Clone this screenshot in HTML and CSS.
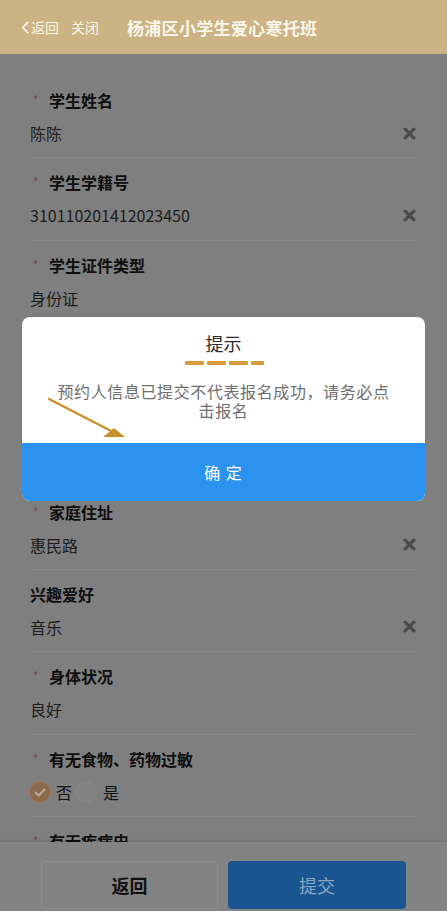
FILE: index.html
```html
<!DOCTYPE html>
<html lang="zh">
<head>
<meta charset="utf-8">
<title>杨浦区小学生爱心寒托班</title>
<link rel="stylesheet" href="styles.css">
</head>
<body>
<header class="nav">
  <span class="nav-back"><svg class="chev" viewBox="0 0 10 16" width="9" height="15"><path d="M8 1.5 L2 8 L8 14.5" fill="none" stroke="#fff" stroke-width="1.6"/></svg>返回</span>
  <span class="nav-close">关闭</span>
  <span class="nav-title">杨浦区小学生爱心寒托班</span>
</header>

<main class="form">
  <div class="field">
    <div class="label"><span class="req">*</span>学生姓名</div>
    <div class="value-row"><span class="value">陈陈</span><svg class="clear" viewBox="0 0 12 12" width="13" height="13"><path d="M2 2 L10 10 M10 2 L2 10" stroke="#4a4a4a" stroke-width="3" stroke-linecap="round"/></svg></div>
  </div>
  <div class="field">
    <div class="label"><span class="req">*</span>学生学籍号</div>
    <div class="value-row"><span class="value">310110201412023450</span><svg class="clear" viewBox="0 0 12 12" width="13" height="13"><path d="M2 2 L10 10 M10 2 L2 10" stroke="#4a4a4a" stroke-width="3" stroke-linecap="round"/></svg></div>
  </div>
  <div class="field">
    <div class="label"><span class="req">*</span>学生证件类型</div>
    <div class="value-row"><span class="value">身份证</span></div>
  </div>
  <div class="field">
    <div class="label"><span class="req">*</span>学生证件号码</div>
    <div class="value-row"><span class="value">310110201412023450</span></div>
  </div>
  <div class="field">
    <div class="label"><span class="req">*</span>出生日期</div>
    <div class="value-row"><span class="value">2014-12-02</span></div>
  </div>
  <div class="field">
    <div class="label"><span class="req">*</span>家庭住址</div>
    <div class="value-row"><span class="value">惠民路</span><svg class="clear" viewBox="0 0 12 12" width="13" height="13"><path d="M2 2 L10 10 M10 2 L2 10" stroke="#4a4a4a" stroke-width="3" stroke-linecap="round"/></svg></div>
  </div>
  <div class="field">
    <div class="label">兴趣爱好</div>
    <div class="value-row"><span class="value">音乐</span><svg class="clear" viewBox="0 0 12 12" width="13" height="13"><path d="M2 2 L10 10 M10 2 L2 10" stroke="#4a4a4a" stroke-width="3" stroke-linecap="round"/></svg></div>
  </div>
  <div class="field">
    <div class="label"><span class="req">*</span>身体状况</div>
    <div class="value-row"><span class="value">良好</span></div>
  </div>
  <div class="field">
    <div class="label"><span class="req">*</span>有无食物、药物过敏</div>
    <div class="value-row radios">
      <span class="radio checked"><svg viewBox="0 0 22 22" width="22" height="22"><path d="M6.5 11.5 L9.8 14.5 L15.5 8.5" fill="none" stroke="#b9aa9c" stroke-width="2" stroke-linecap="round" stroke-linejoin="round"/></svg></span><span class="radio-text no">否</span><span class="radio"></span><span class="radio-text yes">是</span>
    </div>
  </div>
  <div class="field">
    <div class="label"><span class="req">*</span>有无疾病史</div>
    <div class="value-row"><span class="value">无</span></div>
  </div>
</main>

<footer class="bottom-bar">
  <button class="btn btn-back">返回</button>
  <button class="btn btn-submit">提交</button>
</footer>

<div class="dialog">
  <div class="dialog-body">
    <div class="dialog-title">提示</div>
    <div class="dashes"><span></span><span></span><span></span><span></span></div>
    <div class="dialog-msg"><span class="msg-line">预约人信息已提交不代表报名成功，请务必点</span><span class="msg-line">击报名</span></div>
  </div>
  <div class="dialog-btn">确 定</div>
  <svg class="arrow" viewBox="0 0 80 42" width="80" height="42"><path d="M2 2 L70 37" stroke="#c98f2c" stroke-width="2.4" stroke-linecap="round"/><path d="M78 40 L56 40 L67 31 Z" fill="#c98f2c"/></svg>
</div>
</body>
</html>
```

FILE: styles.css
```css
* { box-sizing: border-box; }
html, body { margin: 0; padding: 0; }
body {
  width: 447px;
  min-height: 911px;
  background: #7f7f7f;
  font-family: "Noto Sans CJK SC", "Noto Sans", sans-serif;
  color: #111;
  overflow: hidden;
}
.nav {
  height: 54px;
  background: #cbb383;
  display: flex;
  align-items: center;
  padding-left: 21px;
  color: #fbf6ea;
}
.nav-back { font-size: 14px; display: flex; align-items: center; }
.chev { margin-right: 1px; }
.nav-close { font-size: 14px; margin-left: 12px; }
.nav-title { font-size: 17px; font-weight: 700; margin-left: 28px; letter-spacing: 0.3px; }

.form { padding-top: 22px; }
.field {
  margin: 0 31px 0 30px;
  padding: 12px 0 12px;
  border-bottom: 1px solid #868686;
  height: 82.33px;
}
.label {
  height: 24px;
  line-height: 24px;
  font-size: 16px;
  font-weight: 700;
  color: #0e0e0e;
  display: flex;
  align-items: center;
}
.req {
  width: 19px;
  padding-left: 3px;
  font-size: 12px;
  color: #7d4a4a;
  font-weight: 400;
}
.value-row {
  margin-top: 9px;
  height: 24px;
  display: flex;
  align-items: center;
  justify-content: space-between;
}
.value { font-size: 16px; color: #1c1c1c; }
.radios { justify-content: flex-start; margin-left: -1px; }
.radio {
  width: 22px;
  height: 22px;
  border-radius: 50%;
  border: 1px solid #888;
  background: #838383;
  display: inline-block;
  flex: none;
}
.radio.checked { background: #8c6a4c; border-color: #9a7658; }
.radio.checked svg { display: block; margin: -1px; }
.radio-text { font-size: 16px; color: #111; }
.radio-text.no { margin: 0 3px 0 5px; }
.radio-text.yes { margin-left: 6px; }

.bottom-bar {
  position: fixed;
  left: 0;
  right: 0;
  bottom: 0;
  height: 69px;
  background: #838383;
  box-shadow: 0 -1px 3px rgba(0,0,0,0.12);
  display: flex;
  gap: 10px;
  padding: 19px 41px 0 41px;
}
.btn {
  width: 177px;
  height: 48px;
  border-radius: 4px;
  font-family: "Noto Sans CJK SC", sans-serif;
  font-size: 18px;
}
.btn-back {
  background: #838383;
  border: 1px solid #8d8d8d;
  color: #111;
  font-weight: 700;
}
.btn-submit {
  background: #1a5591;
  border: none;
  color: #8ba7c5;
  width: 178px;
}

.dialog {
  position: absolute;
  left: 22px;
  top: 317px;
  width: 403px;
  height: 184px;
  border-radius: 8px;
  overflow: hidden;
  background: #fff;
}
.dialog-body {
  height: 126px;
  padding-top: 13px;
  display: flex;
  flex-direction: column;
  align-items: center;
}
.dialog-title { font-size: 18px; line-height: 26px; color: #2a2a2a; }
.dashes { display: flex; gap: 3px; margin-top: 5px; margin-left: 2px; }
.dashes span { display: block; width: 19px; height: 4px; background: #dc9a3b; border-radius: 1px; }
.dashes span:last-child { width: 13px; }
.dialog-msg {
  margin-top: 17px;
  display: flex;
  flex-direction: column;
  align-items: center;
  font-size: 16px;
  line-height: 19px;
  color: #6e6e6e;
  letter-spacing: 0.6px;
}
.msg-line { display: block; white-space: nowrap; }
.dialog-btn {
  height: 58px;
  background: #2b93ef;
  color: #fff;
  font-size: 16px;
  display: flex;
  align-items: center;
  justify-content: center;
  letter-spacing: 1px;
}
.arrow {
  position: absolute;
  left: 25px;
  top: 80px;
}
```
